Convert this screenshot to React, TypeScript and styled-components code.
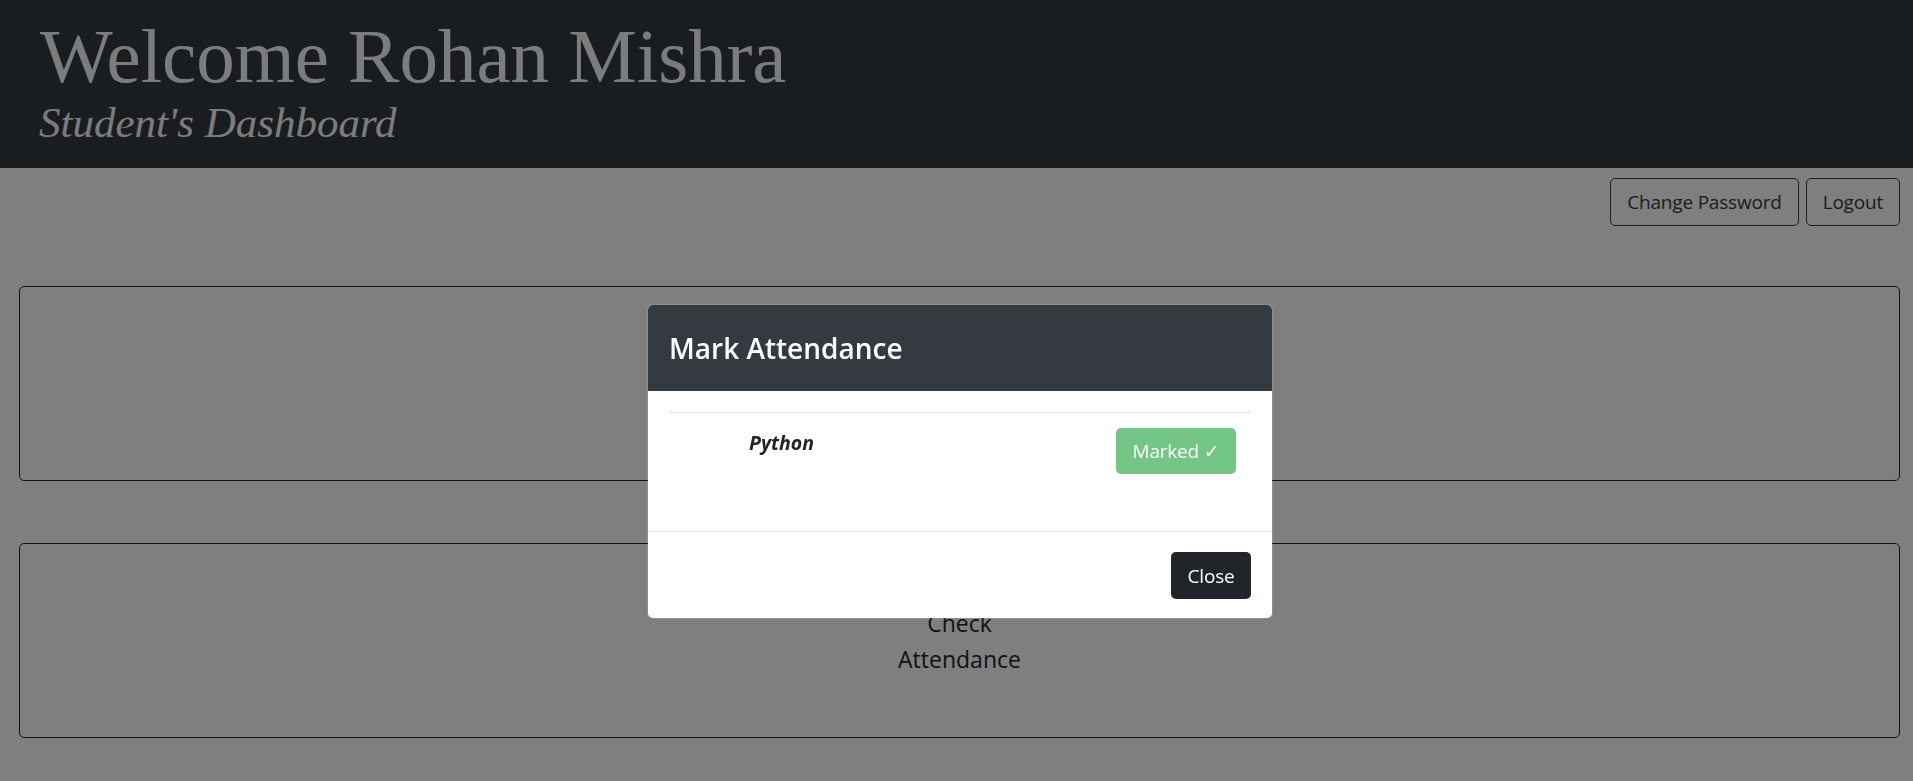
import React from 'react'
import styled, { createGlobalStyle } from 'styled-components'

const GlobalStyle = createGlobalStyle`
  html, body {
    margin: 0;
    padding: 0;
    background: #ffffff;
    font-family: "Open Sans", "Noto Sans", "DejaVu Sans", sans-serif;
    color: #212529;
  }
  * {
    box-sizing: border-box;
  }
`

export default function App() {
  return (<>
    <GlobalStyle />
    <Page>
      <Header>
        <Title>Welcome Rohan Mishra</Title>
        <Subtitle>Student's Dashboard</Subtitle>
      </Header>
      <Toolbar>
        <OutlineButton>Change Password</OutlineButton>
        <OutlineButton>Logout</OutlineButton>
      </Toolbar>
      <Cards>
        <Card>
          <CardText>Mark<br />Attendance</CardText>
        </Card>
        <Card>
          <CardText>Check<br />Attendance</CardText>
        </Card>
      </Cards>
    </Page>
    <Backdrop />
    <Modal>
      <ModalHeader>
        <ModalTitle>Mark Attendance</ModalTitle>
      </ModalHeader>
      <ModalBody>
        <Divider />
        <SubjectRow>
          <Subject>Python</Subject>
          <MarkedButton disabled>Marked ✓</MarkedButton>
        </SubjectRow>
      </ModalBody>
      <ModalFooter>
        <CloseButton>Close</CloseButton>
      </ModalFooter>
    </Modal>
  </>)
}

const Page = styled.div`
  min-height: 781px;
`

const Header = styled.header`
  background: #343a40;
  height: 168px;
  padding: 18px 0 0 40px;
`

const Title = styled.h1`
  margin: 0;
  font-family: "Liberation Serif", "DejaVu Serif", serif;
  font-weight: 400;
  font-size: 77px;
  line-height: 1;
  color: #f8f9fa;
`

const Subtitle = styled.h2`
  margin: 6px 0 0 -1px;
  font-family: "Liberation Serif", "DejaVu Serif", serif;
  font-style: italic;
  font-weight: 400;
  font-size: 43px;
  line-height: 1;
  color: #f8f9fa;
`

const Toolbar = styled.div`
  display: flex;
  justify-content: flex-end;
  gap: 7px;
  margin-top: 10px;
  padding-right: 13px;
`

const OutlineButton = styled.button`
  height: 48px;
  padding: 0 16px;
  border: 1px solid #343a40;
  border-radius: 5px;
  background: transparent;
  color: #343a40;
  font-family: "Open Sans", "Noto Sans", sans-serif;
  font-size: 19px;
  letter-spacing: -0.2px;
  cursor: pointer;
`

const Cards = styled.div`
  display: flex;
  flex-direction: column;
  gap: 62px;
  margin: 60px 13px 0 19px;
`

const Card = styled.div`
  height: 195px;
  border: 1px solid #212529;
  border-radius: 5px;
  display: flex;
  align-items: center;
  justify-content: center;
`

const CardText = styled.div`
  text-align: center;
  font-size: 23px;
  line-height: 36px;
  color: #212529;
`

const Backdrop = styled.div`
  position: fixed;
  inset: 0;
  background: rgba(0, 0, 0, 0.5);
`

const Modal = styled.div`
  position: fixed;
  top: 305px;
  left: 648px;
  width: 624px;
  background: #ffffff;
  border-radius: 5px;
  overflow: hidden;
  box-shadow: 0 0 2px rgba(255, 255, 255, 0.4);
`

const ModalHeader = styled.div`
  height: 86px;
  background: #343a40;
  display: flex;
  align-items: center;
  padding: 0 21px;
`

const ModalTitle = styled.h3`
  margin: 0;
  font-size: 28px;
  font-weight: 600;
  color: #ffffff;
`

const ModalBody = styled.div`
  height: 140px;
  padding: 21px 21px 0;
`

const Divider = styled.hr`
  margin: 0;
  border: 0;
  border-top: 1px solid #dee2e6;
`

const SubjectRow = styled.div`
  display: flex;
  justify-content: space-between;
  align-items: flex-start;
  margin-top: 15px;
  padding: 0 15px 0 80px;
`

const Subject = styled.div`
  font-size: 19.5px;
  font-weight: 700;
  font-style: italic;
  line-height: 30px;
  color: #212529;
`

const MarkedButton = styled.button`
  width: 120px;
  height: 46px;
  border: 0;
  border-radius: 5px;
  background: #73c686;
  color: #ffffff;
  font-family: "Open Sans", "Noto Sans", "DejaVu Sans", sans-serif;
  font-size: 19px;
  letter-spacing: -0.2px;
`

const ModalFooter = styled.div`
  border-top: 1px solid #dee2e6;
  display: flex;
  justify-content: flex-end;
  padding: 20px 21px 19px;
`

const CloseButton = styled.button`
  width: 80px;
  height: 47px;
  border: 0;
  border-radius: 5px;
  background: #212529;
  color: #ffffff;
  font-family: "Open Sans", "Noto Sans", sans-serif;
  font-size: 19px;
  letter-spacing: -0.2px;
  cursor: pointer;
`
